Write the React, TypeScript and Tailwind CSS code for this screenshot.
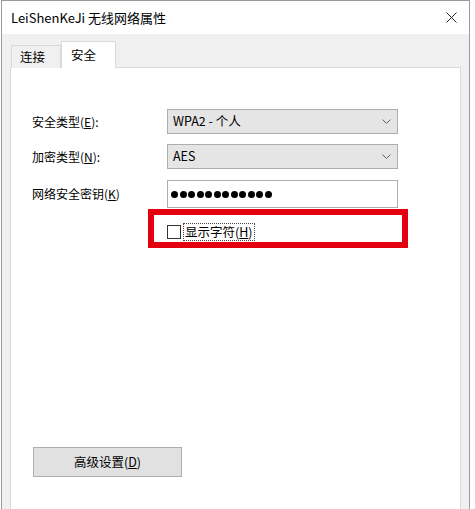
import { ReactNode } from 'react';

const font = { fontFamily: '"Noto Sans CJK SC", "Noto Sans", sans-serif' };

function Chevron() {
  return (
    <svg width="9" height="5" viewBox="0 0 9 5" className="text-[#606060]">
      <path d="M0.5 0.5 L4.5 4.5 L8.5 0.5" fill="none" stroke="currentColor" strokeWidth="1" />
    </svg>
  );
}

function Select({ value }: { value: string }) {
  return (
    <div className="h-[25px] w-[231px] bg-[#e5e5e5] border border-[#adadad] flex items-center justify-between pl-[5px] pr-[6px]">
      <span className="text-[12.5px] leading-none text-black">{value}</span>
      <Chevron />
    </div>
  );
}

function Label({ children }: { children: ReactNode }) {
  return <div className="h-[25px] flex items-center text-[12px] text-black">{children}</div>;
}

export default function App() {
  return (
    <div className="w-[475px] h-[509px] overflow-hidden bg-white flex" style={font}>
      <div className="ml-[1px] w-[469px] h-full flex flex-col border-x border-t border-[#9a9a9a]">
        {/* 标题栏 */}
        <div className="h-[33px] bg-white flex items-center justify-between pl-[9px] pr-[12px]">
          <span className="text-[13px] text-black">LeiShenKeJi 无线网络属性</span>
          <svg width="11" height="11" viewBox="0 0 11 11">
            <path d="M0.5 0.5 L10.5 10.5 M10.5 0.5 L0.5 10.5" stroke="#222" strokeWidth="1" />
          </svg>
        </div>

        <div className="flex-1 bg-[#f0f0f0] px-[8px] pt-[8px] flex flex-col">
          {/* 选项卡 */}
          <div className="flex items-end h-[26px] -mb-[1px] relative z-10">
            <div className="ml-[1px] w-[50px] h-[23px] border border-b-0 border-[#d9d9d9] bg-[#f0f0f0] flex items-center pl-[8px] text-[12.5px] text-black">
              连接
            </div>
            <div className="w-[55px] h-[27px] border border-b-0 border-[#d9d9d9] bg-white flex items-start pt-[4px] pl-[9px] text-[12.5px] text-black">
              安全
            </div>
          </div>

          {/* 面板 */}
          <div className="relative flex-1 bg-white border border-[#d9d9d9] border-b-0 pl-[21px] pt-[41px]">
            <div className="grid grid-cols-[135px_231px] gap-y-[10px]">
              <Label>
                <span>安全类型(<span className="underline">E</span>):</span>
              </Label>
              <Select value="WPA2 - 个人" />
              <Label>
                <span>加密类型(<span className="underline">N</span>):</span>
              </Label>
              <Select value="AES" />
              <div className="h-[27px] flex items-center text-[12px] text-black mt-[1px]">
                <span>网络安全密钥(<span className="underline">K</span>)</span>
              </div>
              <div className="h-[28px] w-[231px] bg-white border border-[#adadad] flex items-center pl-[3px] gap-[1.5px] mt-[1px]">
                {Array.from({ length: 12 }).map((_, i) => (
                  <span key={i} className="w-[7px] h-[7px] rounded-full bg-black" />
                ))}
              </div>
            </div>

            {/* 显示字符 */}
            <div className="ml-[135px] mt-[15px] flex items-center h-[18px]">
              <span className="w-[14px] h-[14px] border border-[#333] bg-white" />
              <span className="ml-[2px] border border-dotted border-[#444] px-[1px] text-[12.5px] leading-[16px] text-black">
                显示字符(<span className="underline">H</span>)
              </span>
            </div>

            {/* 标注框 */}
            <div className="absolute left-[137px] top-[141px] w-[260px] h-[39px] border-[6px] border-[#e3000f]" />

            <div className="mt-[206px] ml-[1px] w-[149px] h-[30px] bg-[#e1e1e1] border border-[#adadad] flex items-center justify-center text-[12.5px] text-black">
              高级设置(<span className="underline">D</span>)
            </div>
          </div>
        </div>
      </div>
      <div className="flex-1 h-full bg-white" />
    </div>
  );
}
